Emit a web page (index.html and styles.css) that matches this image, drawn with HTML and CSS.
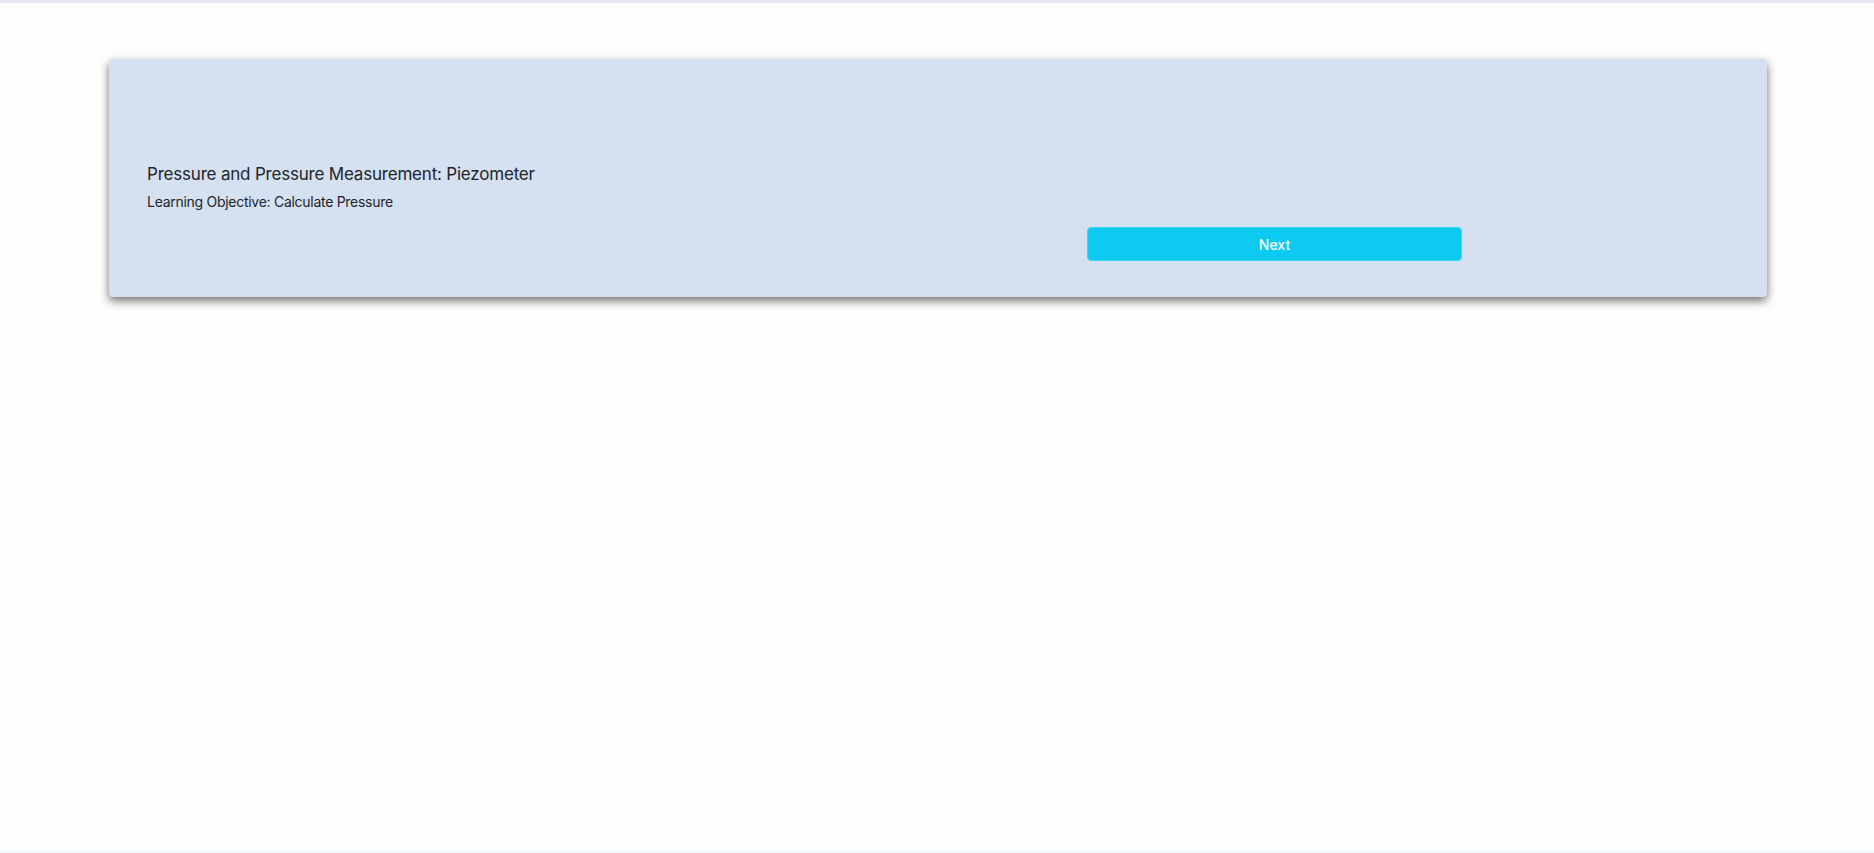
FILE: index.html
```html
<!DOCTYPE html>
<html lang="en">
<head>
<meta charset="utf-8">
<title>Piezometer</title>
<link rel="stylesheet" href="styles.css">
</head>
<body>
<div class="topbar"></div>
<main class="page">
  <section class="card">
    <h1 class="title">Pressure and Pressure Measurement: Piezometer</h1>
    <p class="objective">Learning Objective: Calculate Pressure</p>
    <div class="actions">
      <div></div>
      <button class="btn-next" type="button">Next</button>
    </div>
  </section>
</main>
<div class="bottombar"></div>
</body>
</html>
```
FILE: styles.css
```css
html, body {
  margin: 0;
  padding: 0;
  height: 100%;
}
body {
  background: #fefefe;
  font-family: Inter, "Noto Sans", "Liberation Sans", sans-serif;
  color: #212529;
  display: flex;
  flex-direction: column;
}
.topbar {
  height: 3px;
  background: #e3e7f1;
  flex: none;
}
.page {
  flex: 1;
  padding: 56px 107px 0 109px;
}
.card {
  background: #d5e0f1;
  border-radius: 4px;
  box-shadow: 0 4px 10px rgba(0, 0, 0, 0.55);
  padding: 103px 38px 36px;
}
.title {
  margin: 0;
  font-size: 17px;
  line-height: 24px;
  font-weight: 400;
  letter-spacing: -0.2px;
}
.objective {
  margin: 6px 0 0;
  font-size: 14px;
  line-height: 20px;
  letter-spacing: -0.28px;
}
.actions {
  display: grid;
  grid-template-columns: 940px 375px;
  margin-top: 15px;
}
.btn-next {
  height: 34px;
  border: 1px solid #3dd5f3;
  border-radius: 4px;
  background: #0dcaf0;
  color: #fff;
  font-family: Inter, "Noto Sans", "Liberation Sans", sans-serif;
  font-size: 14px;
  font-weight: 500;
  padding: 0;
}
.bottombar {
  height: 3px;
  background: #f5f8fd;
  flex: none;
}
```
